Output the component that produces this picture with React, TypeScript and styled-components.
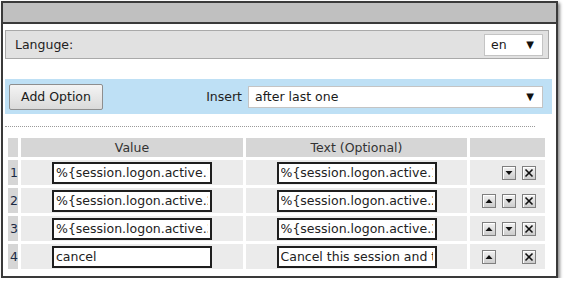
import React from "react";
import styled, { createGlobalStyle } from "styled-components";

const GlobalStyle = createGlobalStyle`
  body {
    margin: 0;
    background: #fff;
    font-family: "DejaVu Sans", Tahoma, sans-serif;
    font-size: 12.5px;
    color: #222;
  }
`;

const Frame = styled.div`
  box-sizing: border-box;
  width: 557px;
  height: 277px;
  margin: 1px 0 0 1px;
  border: 2px solid #3a3a3a;
  box-shadow: 2px 2px 3px rgba(0, 0, 0, 0.45);
  background: #fff;
`;

const TitleBar = styled.div`
  height: 19px;
  background: #c0c0c0;
  border-bottom: 2px solid #3a3a3a;
`;

const Body = styled.div`
  padding: 6px 2px 4px 2px;
`;

const LangRow = styled.div`
  box-sizing: border-box;
  width: 544px;
  height: 29px;
  display: flex;
  align-items: center;
  justify-content: space-between;
  padding: 0 5px 0 9px;
  background: #e1e1e1;
  border: 1px solid #a9a9a9;
`;

const SelectBox = styled.div<{ $width: number }>`
  box-sizing: border-box;
  width: ${(p) => p.$width}px;
  height: 22px;
  display: flex;
  align-items: center;
  justify-content: space-between;
  padding: 0 8px 0 6px;
  background: #fff;
  border: 1px solid #c4c4c4;
  color: #1a1a1a;
`;

const Arrow = styled.span`
  font-size: 10px;
  color: #111;
`;

const BlueBar = styled.div`
  box-sizing: border-box;
  width: 547px;
  height: 35px;
  margin-top: 20px;
  display: flex;
  align-items: center;
  padding: 0 9px 0 4px;
  background: #bee0f5;
`;

const AddButton = styled.button`
  box-sizing: border-box;
  width: 94px;
  height: 26px;
  padding: 0;
  font: inherit;
  color: #1a1a1a;
  background: linear-gradient(#f4f4f4, #dadada);
  border: 1px solid #8e8e8e;
  border-radius: 2px;
`;

const InsertLabel = styled.span`
  margin-left: auto;
  margin-right: 6px;
`;

const DottedRule = styled.div`
  width: 530px;
  margin-top: 12px;
  border-top: 1px dotted #9a9a9a;
`;

const Table = styled.table`
  margin-top: 8px;
  border-collapse: separate;
  border-spacing: 3px;
  table-layout: fixed;
`;

const Th = styled.th<{ $width: number }>`
  width: ${(p) => p.$width}px;
  height: 19px;
  padding: 0;
  background: #d6d6d6;
  font-weight: normal;
  text-align: center;
  color: #333;
`;

const NumCell = styled.td`
  height: 25px;
  padding: 0 0 0 2px;
  background: #d6d6d6;
  color: #1c2a44;
`;

const Cell = styled.td`
  height: 25px;
  padding: 0;
  background: #ebebeb;
`;

const TextInput = styled.input`
  display: block;
  box-sizing: border-box;
  width: 160px;
  height: 22px;
  margin: 0 auto;
  padding: 0 2px;
  font: inherit;
  color: #222;
  background: #fff;
  border: 2px solid #1e1e1e;
  outline: none;
`;

const Actions = styled.div`
  display: flex;
  justify-content: flex-end;
  gap: 6px;
  padding-right: 9px;
`;

const IconBox = styled.span<{ $empty?: boolean }>`
  box-sizing: border-box;
  width: 14px;
  height: 14px;
  display: flex;
  align-items: center;
  justify-content: center;
  border: 1px solid ${(p) => (p.$empty ? "transparent" : "#7f7f7f")};
  background: ${(p) => (p.$empty ? "transparent" : "linear-gradient(#f2f2f2, #cccccc)")};
  box-shadow: ${(p) => (p.$empty ? "none" : "inset 1px 1px 0 #fff")};
`;

type Kind = "up" | "down" | "x" | "none";

function IconButton({ kind }: { kind: Kind }) {
  if (kind === "none") return <IconBox $empty />;
  return (
    <IconBox>
      <svg width="12" height="12" viewBox="0 0 12 12">
        {kind === "up" && <polygon points="2.5,8 9.5,8 6,4" fill="#111" />}
        {kind === "down" && <polygon points="2.5,4 9.5,4 6,8" fill="#111" />}
        {kind === "x" && (
          <g stroke="#111" strokeWidth="1.6">
            <line x1="2.5" y1="2.5" x2="9.5" y2="9.5" />
            <line x1="9.5" y1="2.5" x2="2.5" y2="9.5" />
          </g>
        )}
      </svg>
    </IconBox>
  );
}

const rows: { value: string; text: string; icons: Kind[] }[] = [
  { value: "%{session.logon.active.1}", text: "%{session.logon.active.1}", icons: ["none", "down", "x"] },
  { value: "%{session.logon.active.2}", text: "%{session.logon.active.2}", icons: ["up", "down", "x"] },
  { value: "%{session.logon.active.3}", text: "%{session.logon.active.3}", icons: ["up", "down", "x"] },
  { value: "cancel", text: "Cancel this session and try again", icons: ["up", "none", "x"] },
];

export default function App() {
  return (
    <>
      <GlobalStyle />
      <Frame>
        <TitleBar />
        <Body>
          <LangRow>
            <span>Languge:</span>
            <SelectBox $width={59}>
              <span>en</span>
              <Arrow>▼</Arrow>
            </SelectBox>
          </LangRow>

          <BlueBar>
            <AddButton>Add Option</AddButton>
            <InsertLabel>Insert</InsertLabel>
            <SelectBox $width={295}>
              <span>after last one</span>
              <Arrow>▼</Arrow>
            </SelectBox>
          </BlueBar>

          <DottedRule />

          <Table>
            <thead>
              <tr>
                <Th $width={10} />
                <Th $width={222}>Value</Th>
                <Th $width={221}>Text (Optional)</Th>
                <Th $width={75} />
              </tr>
            </thead>
            <tbody>
              {rows.map((r, i) => (
                <tr key={i}>
                  <NumCell>{i + 1}</NumCell>
                  <Cell>
                    <TextInput defaultValue={r.value} readOnly />
                  </Cell>
                  <Cell>
                    <TextInput defaultValue={r.text} readOnly />
                  </Cell>
                  <Cell>
                    <Actions>
                      {r.icons.map((k, j) => (
                        <IconButton key={j} kind={k} />
                      ))}
                    </Actions>
                  </Cell>
                </tr>
              ))}
            </tbody>
          </Table>
        </Body>
      </Frame>
    </>
  );
}
